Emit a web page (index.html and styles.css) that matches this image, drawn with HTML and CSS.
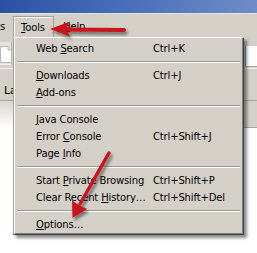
FILE: index.html
```html
<!DOCTYPE html>
<html>
<head>
<meta charset="utf-8">
<link rel="stylesheet" href="styles.css">
</head>
<body>
<div class="window">
  <div class="titlebar"></div>
  <div class="menubar">
    <span class="mb-item mb-cut">s</span>
    <span class="mb-item mb-open"><u>T</u>ools</span>
    <span class="mb-item"><u>H</u>elp</span>
  </div>
  <div class="navbar">
    <div class="newbtn">
      <svg width="12" height="18" viewBox="0 0 12 18">
        <path d="M0.5 1.5 H8 L11.5 5 V17.5 H0.5 Z" fill="#fff" stroke="#b8b6b0"/>
        <path d="M8 1.5 V5 H11.5" fill="#e8e6e2" stroke="#b8b6b0"/>
      </svg>
    </div>
    <div class="navfill"></div>
    <div class="urlbox"></div>
  </div>
  <div class="bookmarks"><span class="bm">La</span></div>
  <div class="tabbar">
    <div class="tab"></div>
    <div class="tabfill"></div>
  </div>
  <div class="content"></div>

  <div class="menu">
    <div class="item"><span class="label">Web <u>S</u>earch</span><span class="key">Ctrl+K</span></div>
    <div class="sep"></div>
    <div class="item"><span class="label"><u>D</u>ownloads</span><span class="key">Ctrl+J</span></div>
    <div class="item"><span class="label"><u>A</u>dd-ons</span></div>
    <div class="sep"></div>
    <div class="item"><span class="label"><u>J</u>ava Console</span></div>
    <div class="item"><span class="label">Error <u>C</u>onsole</span><span class="key">Ctrl+Shift+J</span></div>
    <div class="item"><span class="label">Page <u>I</u>nfo</span></div>
    <div class="sep"></div>
    <div class="item"><span class="label">Start <u>P</u>rivate Browsing</span><span class="key">Ctrl+Shift+P</span></div>
    <div class="item"><span class="label">Clear Recent <u>H</u>istory…</span><span class="key">Ctrl+Shift+Del</span></div>
    <div class="sep"></div>
    <div class="item"><span class="label"><u>O</u>ptions…</span></div>
  </div>

  <svg class="arrows" width="257" height="253" viewBox="0 0 257 253">
    <defs>
      <filter id="sh" x="-20%" y="-20%" width="150%" height="150%">
        <feDropShadow dx="2" dy="3" stdDeviation="1.6" flood-color="#000" flood-opacity="0.45"/>
      </filter>
    </defs>
    <g filter="url(#sh)" fill="#c8141a" stroke="#c8141a">
      <line x1="124" y1="30" x2="64" y2="29.5" stroke-width="4" stroke-linecap="round"/>
      <polygon points="50,29 70,21.5 66,29.3 70,36.5" stroke="none"/>
      <line x1="109" y1="153" x2="80" y2="204" stroke-width="3.5" stroke-linecap="round"/>
      <polygon points="72.5,218 72,200.5 79.5,205.5 87,209" stroke="none"/>
    </g>
  </svg>
</div>
</body>
</html>
```
FILE: styles.css
```css
html, body {
  margin: 0;
  padding: 0;
}
body {
  width: 257px;
  height: 253px;
  overflow: hidden;
  background: #fff;
  font-family: "DejaVu Sans", "Liberation Sans", sans-serif;
  font-size: 10px;
  letter-spacing: -0.15px;
  color: #000;
}
.window {
  position: relative;
  width: 257px;
  height: 253px;
  overflow: hidden;
  display: flex;
  flex-direction: column;
}
.titlebar {
  height: 13px;
  flex: none;
  background: linear-gradient(90deg, #2c51a4 0%, #4a6fba 50%, #6f8cc6 100%);
  border-bottom: 1px solid #e6e4de;
}
.menubar {
  height: 23px;
  flex: none;
  background: #d4d0c8;
  display: flex;
  align-items: flex-end;
}
.mb-item {
  height: 21px;
  line-height: 22px;
  box-sizing: border-box;
}
.mb-cut {
  width: 13px;
  padding-left: 0;
}
.mb-open {
  width: 41px;
  padding-left: 7px;
  border: 1px solid #a19e97;
  border-bottom: none;
  box-shadow: inset 1px 1px 0 #fff;
}
.mb-item:last-child {
  padding-left: 9px;
}
.navbar {
  height: 31px;
  flex: none;
  display: flex;
  align-items: flex-start;
  background: #d4d0c8;
}
.newbtn {
  width: 12px;
  height: 23px;
  margin-top: 5px;
  box-sizing: border-box;
  border-right: 1px solid #b4b1aa;
  border-bottom: 1px solid #f2f1ee;
  background: #e4e2dd;
  padding-top: 3px;
}
.newbtn svg {
  display: block;
}
.navfill {
  flex: 1;
}
.urlbox {
  width: 12px;
  height: 21px;
  margin-top: 9px;
  box-sizing: border-box;
  background: #fff;
  border-left: 1px solid #7f9db9;
  border-bottom: 1px solid #a9a69f;
}
.bookmarks {
  height: 33px;
  flex: none;
  background: #d4d0c8;
  border-top: 1px solid #f0efeb;
  border-bottom: 1px solid #a9a69f;
  box-sizing: border-box;
  display: flex;
  align-items: flex-end;
}
.bm {
  padding-left: 4px;
  padding-bottom: 3px;
  font-size: 11px;
}
.tabbar {
  height: 27px;
  flex: none;
  display: flex;
}
.tab {
  width: 20px;
  background: linear-gradient(180deg, #d9d6cf 0%, #f4f3f0 70%, #fff 100%);
}
.tabfill {
  flex: 1;
  background: #d4d0c8;
  border-bottom: 1px solid #a9a69f;
}
.content {
  flex: 1;
  background: #fff;
}
.menu {
  position: absolute;
  left: 13px;
  top: 37px;
  width: 231px;
  box-sizing: border-box;
  background: #d4d0c8;
  border-left: 1px solid #a19e97;
  border-top: 1px solid #fff;
  border-right: 1px solid #404040;
  border-bottom: 1px solid #404040;
  box-shadow: inset 1px 0 0 #fff, inset -1px -1px 0 #808080, 3px 3px 3px rgba(0, 0, 0, 0.45);
  padding: 2px 2px 1px 1px;
}
.item {
  height: 17px;
  line-height: 17px;
  display: flex;
  padding-left: 21px;
  white-space: nowrap;
}
.label {
  width: 117px;
  flex: none;
}
.sep {
  height: 10px;
  box-sizing: border-box;
  padding-top: 4px;
  margin: 0 1px 0 2px;
}
.sep::before {
  content: "";
  display: block;
  border-top: 1px solid #9a978f;
  border-bottom: 1px solid #fff;
}
.arrows {
  position: absolute;
  left: 0;
  top: 0;
  pointer-events: none;
}
```
